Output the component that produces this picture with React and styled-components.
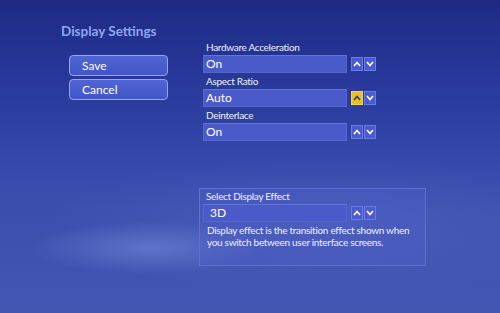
import React from "react";
import styled, { createGlobalStyle } from "styled-components";

const Global = createGlobalStyle`
  html, body { margin: 0; padding: 0; }
  body { font-family: Lato, "Noto Sans", sans-serif; }
`;

const Screen = styled.div`
  width: 500px;
  height: 313px;
  overflow: hidden;
  display: flex;
  box-sizing: border-box;
  background:
    radial-gradient(ellipse 120px 26px at 150px 248px, rgba(125, 145, 225, 0.5), transparent),
    radial-gradient(ellipse 280px 70px at 330px 225px, rgba(110, 130, 215, 0.25), transparent),
    linear-gradient(180deg, #1e2a84 0%, #2a3b9e 30%, #3a4dad 60%, #4256b2 100%);
  color: #f2f4ff;
`;

const Side = styled.div`
  width: 142px;
  padding: 22px 0 0 61px;
  display: flex;
  flex-direction: column;
`;

const Title = styled.h1`
  margin: 0 0 15px;
  font-size: 13.5px;
  font-weight: bold;
  line-height: 18px;
  color: #8ea4ee;
`;

const Button = styled.div`
  margin: 0 0 3px 8px;
  width: 99px;
  height: 21px;
  box-sizing: border-box;
  border: 1px solid #95a6f2;
  border-radius: 4px;
  background: linear-gradient(180deg, #5064d4 0%, #4356c6 100%);
  font-size: 12px;
  line-height: 19px;
  padding-left: 12px;
  color: #ffffff;
`;

const Main = styled.div`
  padding-top: 39px;
  width: 240px;
  display: flex;
  flex-direction: column;
`;

const Label = styled.div`
  padding-left: 3px;
  font-size: 10px;
  letter-spacing: -0.3px;
  line-height: 16px;
  color: #eef0ff;
`;

const Row = styled.div`
  display: flex;
  align-items: center;
  gap: 4px;
`;

const Field = styled.div`
  width: 144px;
  height: 18px;
  box-sizing: border-box;
  border: 1px solid #5566cc;
  border-top-color: #6474d6;
  background: #4a5bc9;
  font-size: 12px;
  line-height: 16px;
  padding-left: ${(p) => p.$indent || 2}px;
  color: #ffffff;
`;

const Spin = styled.div`
  display: flex;
  gap: 1px;
`;

const Arrow = styled.div`
  width: 12px;
  height: 14px;
  box-sizing: border-box;
  border: 1px solid ${(p) => (p.$active ? "#f4d44a" : "#6b7ce0")};
  background: ${(p) => (p.$active ? "#e8c224" : "#4a5ad0")};
  display: flex;
  align-items: center;
  justify-content: center;
  svg { display: block; }
`;

const Panel = styled.div`
  margin: 47px 0 0 -4px;
  width: 227px;
  height: 78px;
  box-sizing: border-box;
  border: 1px solid #6070d0;
  background: rgba(80, 96, 200, 0.35);
  padding: 0 0 0 3px;
`;

const PanelLabel = styled(Label)`
  line-height: 15px;
`;

const Note = styled.p`
  margin: 2px 0 0 4px;
  font-size: 10px;
  letter-spacing: -0.3px;
  line-height: 12px;
  color: #eef0ff;
`;

function Chevron({ up, active }) {
  const color = active ? "#3a3a80" : "#ffffff";
  return (
    <svg width="8" height="6" viewBox="0 0 8 6">
      <path
        d={up ? "M1 5 L4 1.5 L7 5" : "M1 1 L4 4.5 L7 1"}
        fill="none"
        stroke={color}
        strokeWidth="1.7"
      />
    </svg>
  );
}

function Spinner({ active }) {
  return (
    <Spin>
      <Arrow $active={active}>
        <Chevron up active={active} />
      </Arrow>
      <Arrow>
        <Chevron />
      </Arrow>
    </Spin>
  );
}

const settings = [
  { label: "Hardware Acceleration", value: "On" },
  { label: "Aspect Ratio", value: "Auto", active: true },
  { label: "Deinterlace", value: "On" },
];

export default function App() {
  return (
    <>
      <Global />
      <Screen>
        <Side>
          <Title>Display Settings</Title>
          <Button>Save</Button>
          <Button>Cancel</Button>
        </Side>
        <Main>
          {settings.map((s) => (
            <React.Fragment key={s.label}>
              <Label>{s.label}</Label>
              <Row>
                <Field>{s.value}</Field>
                <Spinner active={s.active} />
              </Row>
            </React.Fragment>
          ))}
          <Panel>
            <PanelLabel>Select Display Effect</PanelLabel>
            <Row>
              <Field $indent={6}>3D</Field>
              <Spinner />
            </Row>
            <Note>
              Display effect is the transition effect shown when you switch
              between user interface screens.
            </Note>
          </Panel>
        </Main>
      </Screen>
    </>
  );
}
